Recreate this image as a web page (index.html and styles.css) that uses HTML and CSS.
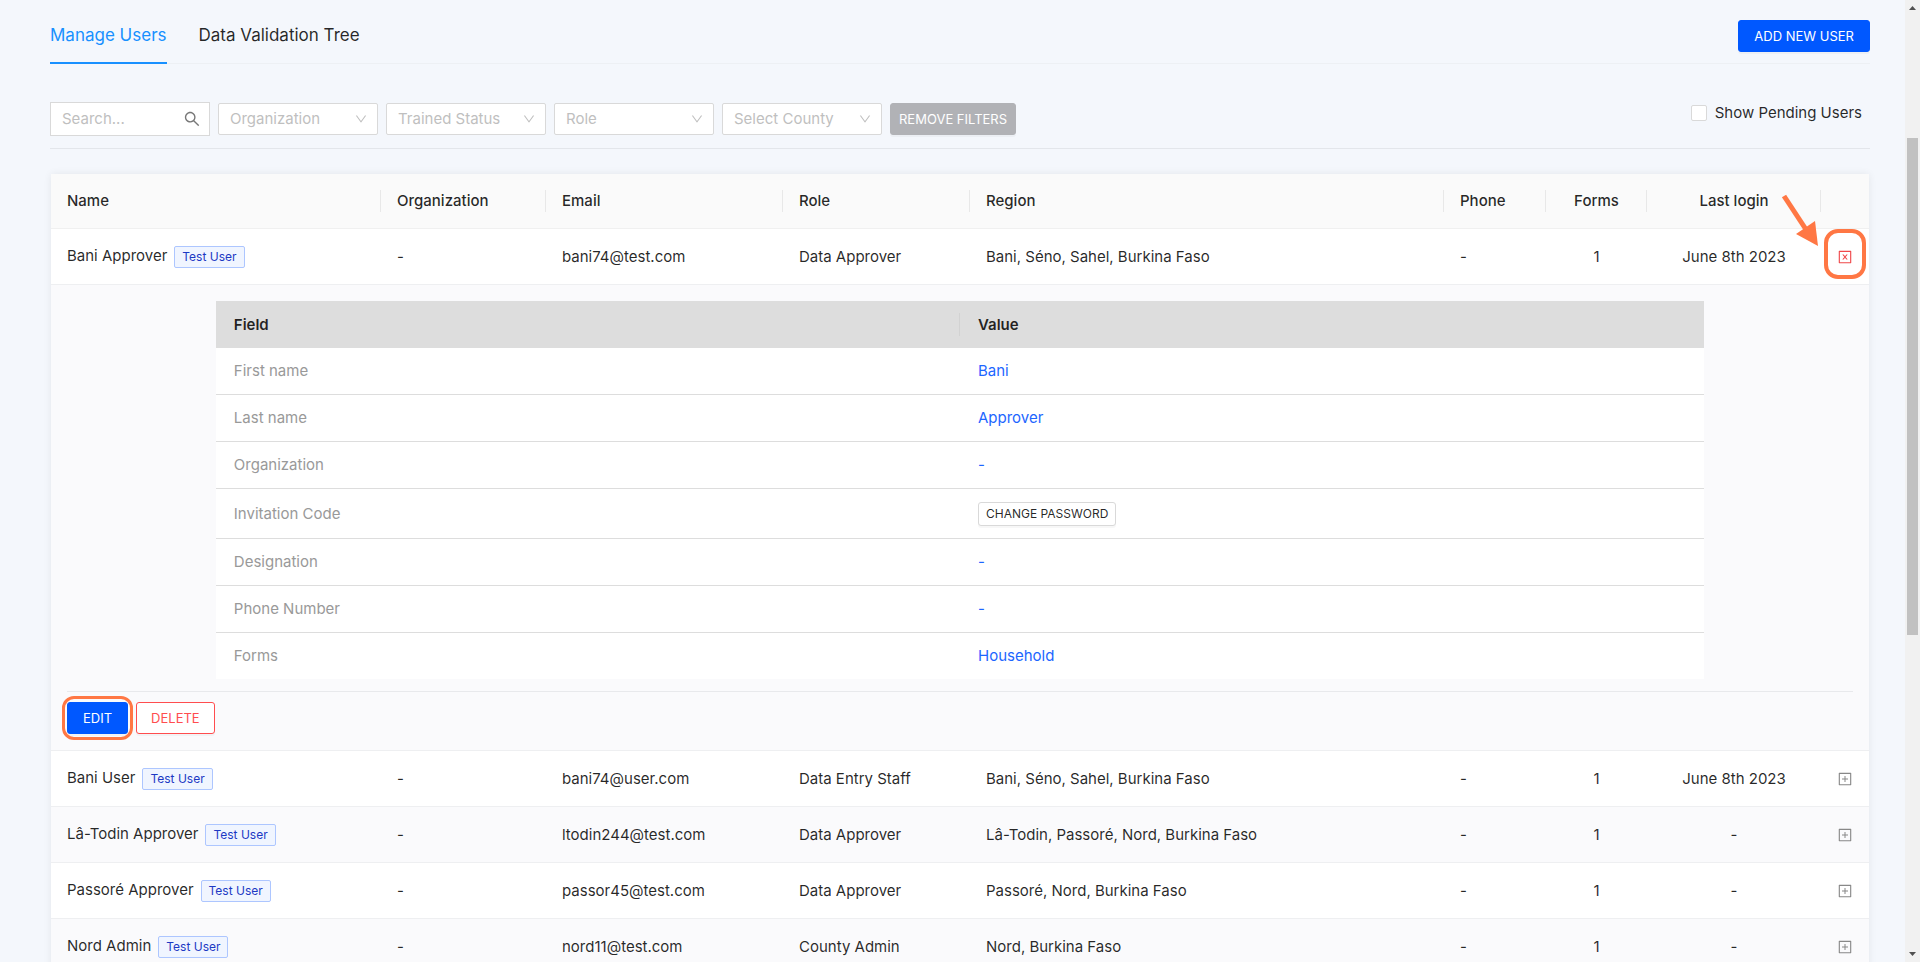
FILE: index.html
```html
<!DOCTYPE html>
<html lang="en">
<head>
<meta charset="utf-8">
<title>Manage Users</title>
<link rel="stylesheet" href="styles.css">
</head>
<body>
<svg class="sprite" aria-hidden="true">
  <symbol id="i-down" viewBox="64 64 896 896"><path d="M884 256h-75c-5.100 0-9.900 2.500-12.900 6.600L512 654.200 227.900 262.600c-3-4.100-7.800-6.600-12.900-6.600h-75c-6.500 0-10.300 7.400-6.500 12.700l352.600 486.100c12.800 17.600 39 17.600 51.700 0l352.600-486.100c3.900-5.300.1-12.700-6.400-12.700z"/></symbol>
  <symbol id="i-plus" viewBox="64 64 896 896"><path d="M328 544h152v152c0 4.400 3.600 8 8 8h48c4.400 0 8-3.600 8-8V544h152c4.400 0 8-3.600 8-8v-48c0-4.400-3.600-8-8-8H544V328c0-4.400-3.600-8-8-8h-48c-4.400 0-8 3.600-8 8v152H328c-4.400 0-8 3.600-8 8v48c0 4.400 3.600 8 8 8z"/><path d="M880 112H144c-17.700 0-32 14.300-32 32v736c0 17.700 14.300 32 32 32h736c17.700 0 32-14.300 32-32V144c0-17.700-14.300-32-32-32zm-40 728H184V184h656v656z"/></symbol>
  <symbol id="i-close" viewBox="64 64 896 896"><path d="M354 671h58.900c4.700 0 9.200-2.100 12.300-5.700L512 561.800l86.800 103.500c3 3.600 7.500 5.700 12.300 5.700H670c6.800 0 10.500-7.900 6.100-13.100L553.800 512l122.400-145.900c4.400-5.200.7-13.100-6.100-13.100h-58.900c-4.700 0-9.200 2.100-12.300 5.700L512 462.200l-86.800-103.500c-3-3.600-7.500-5.700-12.300-5.700H354c-6.800 0-10.500 7.900-6.100 13.100L470.200 512 347.900 657.900A7.950 7.950 0 0 0 354 671z"/><path d="M880 112H144c-17.700 0-32 14.300-32 32v736c0 17.700 14.300 32 32 32h736c17.700 0 32-14.300 32-32V144c0-17.700-14.300-32-32-32zm-40 728H184V184h656v656z"/></symbol>
</svg>
<div class="shell">
<main class="page">
  <header class="topbar">
    <nav class="tabs">
      <a class="tab tab-active" href="#users">Manage Users</a>
      <a class="tab" href="#tree">Data Validation Tree</a>
    </nav>
    <button class="btn btn-primary" type="button">ADD NEW USER</button>
  </header>

  <section class="filters">
    <div class="search">
      <input class="search-input" type="text" placeholder="Search..." aria-label="Search">
      <button class="search-btn" type="button" aria-label="Search users">
        <svg class="icon-search" viewBox="64 64 896 896"><path d="M909.600 854.500L649.900 594.800C690.200 542.700 712 479 712 412c0-80.200-31.300-155.400-87.900-212.100-56.600-56.700-132-87.900-212.100-87.900s-155.500 31.300-212.100 87.900C143.200 256.500 112 331.800 112 412c0 80.100 31.300 155.500 87.900 212.100C256.500 680.800 331.800 712 412 712c67 0 130.600-21.800 182.700-62l259.700 259.600a8.200 8.200 0 0 0 11.600 0l43.600-43.500a8.200 8.200 0 0 0 0-11.600zM570.400 570.400C528 612.700 471.800 636 412 636s-116-23.300-158.400-65.600C211.300 528 188 471.800 188 412s23.300-116.100 65.600-158.400C296 211.300 352.200 188 412 188s116.100 23.200 158.400 65.600S636 352.200 636 412s-23.300 116.100-65.600 158.400z"/></svg>
      </button>
    </div>
    <div class="picker"><select class="select" aria-label="Organization"><option>Organization</option></select><svg class="chevron"><use href="#i-down"/></svg></div>
    <div class="picker"><select class="select" aria-label="Trained Status"><option>Trained Status</option></select><svg class="chevron"><use href="#i-down"/></svg></div>
    <div class="picker"><select class="select" aria-label="Role"><option>Role</option></select><svg class="chevron"><use href="#i-down"/></svg></div>
    <div class="picker"><select class="select" aria-label="Select County"><option>Select County</option></select><svg class="chevron"><use href="#i-down"/></svg></div>
    <button class="btn btn-muted" type="button">REMOVE FILTERS</button>
    <label class="pending"><input class="check" type="checkbox">Show Pending Users</label>
  </section>

  <section class="card">
    <table class="users">
      <colgroup><col class="c-name"><col class="c-org"><col class="c-email"><col class="c-role"><col><col class="c-phone"><col class="c-forms"><col class="c-login"><col class="c-toggle"></colgroup>
      <thead>
        <tr><th>Name</th><th>Organization</th><th>Email</th><th>Role</th><th>Region</th><th>Phone</th><th class="mid">Forms</th><th class="mid">Last login</th><th></th></tr>
      </thead>
      <tbody>
        <tr>
          <td>Bani Approver<span class="tag">Test User</span></td><td>-</td><td>bani74@test.com</td><td>Data Approver</td><td>Bani, Séno, Sahel, Burkina Faso</td><td>-</td><td class="mid">1</td><td class="mid">June 8th 2023</td>
          <td class="mid">
            <span class="marked">
              <button class="toggle toggle-open" type="button" aria-label="Collapse"><svg class="icon"><use href="#i-close"/></svg></button>
              <svg class="arrow" viewBox="0 0 40 54"><path d="M4 3L27 38" stroke="#ff7744" stroke-width="5"/><path d="M38 53L16 41L35 28Z" fill="#ff7744"/></svg>
            </span>
          </td>
        </tr>
        <tr class="alt">
          <td class="detail" colspan="9">
            <table class="fields">
              <thead><tr><th>Field</th><th>Value</th></tr></thead>
              <tbody>
                <tr><td>First name</td><td>Bani</td></tr>
                <tr><td>Last name</td><td>Approver</td></tr>
                <tr><td>Organization</td><td>-</td></tr>
                <tr class="tall"><td>Invitation Code</td><td><button class="btn btn-small" type="button">CHANGE PASSWORD</button></td></tr>
                <tr><td>Designation</td><td>-</td></tr>
                <tr><td>Phone Number</td><td>-</td></tr>
                <tr><td>Forms</td><td>Household</td></tr>
              </tbody>
            </table>
            <div class="actions">
              <span class="marked-edit"><button class="btn btn-primary" type="button">EDIT</button></span>
              <button class="btn btn-danger" type="button">DELETE</button>
            </div>
          </td>
        </tr>
        <tr>
          <td>Bani User<span class="tag">Test User</span></td><td>-</td><td>bani74@user.com</td><td>Data Entry Staff</td><td>Bani, Séno, Sahel, Burkina Faso</td><td>-</td><td class="mid">1</td><td class="mid">June 8th 2023</td>
          <td class="mid"><button class="toggle" type="button" aria-label="Expand"><svg class="icon"><use href="#i-plus"/></svg></button></td>
        </tr>
        <tr class="alt">
          <td>Lâ-Todin Approver<span class="tag">Test User</span></td><td>-</td><td>ltodin244@test.com</td><td>Data Approver</td><td>Lâ-Todin, Passoré, Nord, Burkina Faso</td><td>-</td><td class="mid">1</td><td class="mid">-</td>
          <td class="mid"><button class="toggle" type="button" aria-label="Expand"><svg class="icon"><use href="#i-plus"/></svg></button></td>
        </tr>
        <tr>
          <td>Passoré Approver<span class="tag">Test User</span></td><td>-</td><td>passor45@test.com</td><td>Data Approver</td><td>Passoré, Nord, Burkina Faso</td><td>-</td><td class="mid">1</td><td class="mid">-</td>
          <td class="mid"><button class="toggle" type="button" aria-label="Expand"><svg class="icon"><use href="#i-plus"/></svg></button></td>
        </tr>
        <tr class="alt">
          <td>Nord Admin<span class="tag">Test User</span></td><td>-</td><td>nord11@test.com</td><td>County Admin</td><td>Nord, Burkina Faso</td><td>-</td><td class="mid">1</td><td class="mid">-</td>
          <td class="mid"><button class="toggle" type="button" aria-label="Expand"><svg class="icon"><use href="#i-plus"/></svg></button></td>
        </tr>
      </tbody>
    </table>
  </section>
</main>
<div class="scrollbar" aria-hidden="true">
  <svg class="scroll-arrow" viewBox="0 0 15 16"><path d="M4 10h7L7.500 6z"/></svg>
  <div class="track"><div class="thumb"></div></div>
  <svg class="scroll-arrow" viewBox="0 0 15 16"><path d="M4 6h7L7.500 10z"/></svg>
</div>
</div>
</body>
</html>
```
FILE: styles.css
```css
* { box-sizing: border-box; }
body {
  margin: 0;
  background: #f4f7fc;
  color: rgba(0, 0, 0, 0.85);
  font: 15px/22px Inter, "Open Sans", sans-serif;
}
button, input, select { font: inherit; color: inherit; margin: 0; }
.sprite { display: none; }
.shell { display: flex; height: 100vh; }
.page { flex: 1; min-width: 0; overflow: hidden; padding: 0 35px 0 50px; }

.topbar {
  display: flex;
  justify-content: space-between;
  align-items: flex-start;
  height: 64px;
  border-bottom: 1px solid #edf0f4;
}
.topbar .btn { margin-top: 20px; }
.tabs { display: flex; gap: 32px; height: 64px; }
.tab {
  padding-top: 24px;
  color: rgba(0, 0, 0, 0.85);
  font-size: 17px;
  text-decoration: none;
}
.tab-active { color: #1890ff; border-bottom: 2px solid #1890ff; }

.btn {
  height: 32px;
  padding: 0 15px;
  border: 1px solid #d9d9d9;
  border-radius: 3px;
  background: #fff;
  box-shadow: 0 2px 0 rgba(0, 0, 0, 0.03);
  font-size: 13px;
  white-space: nowrap;
}
.btn-primary { background: #0058ff; border-color: #0058ff; color: #fff; }
.btn-muted { padding: 0 8px; background: #b1b2b6; border-color: #b1b2b6; color: #fff; }
.btn-danger { padding: 0 14px; border-color: #ff4d4f; color: #ff4d4f; }
.btn-small { display: block; height: 24px; padding: 0 7px; font-size: 12px; line-height: 20px; }

.filters {
  display: flex;
  align-items: center;
  gap: 8px;
  height: 85px;
  padding-top: 26px;
  border-bottom: 1px solid #e3e6eb;
}
.search {
  display: flex;
  width: 160px;
  height: 34px;
  border: 1px solid #d9d9d9;
  background: #fff;
}
.search-input { flex: 1; min-width: 0; padding: 0 11px; border: 0; background: none; outline: 0; }
.search-input::placeholder { color: #bfbfbf; opacity: 1; }
.search-btn { display: grid; place-items: center; width: 34px; padding: 0; border: 0; background: none; }
.icon-search { width: 16px; height: 16px; fill: #777; }
.picker { position: relative; width: 160px; }
.select {
  display: block;
  width: 100%;
  height: 32px;
  padding: 0 24px 0 11px;
  border: 1px solid #d9d9d9;
  border-radius: 2px;
  background: #fff;
  color: #bfbfbf;
  appearance: none;
}
.chevron { position: absolute; right: 11px; top: 10px; width: 12px; height: 12px; fill: #bfbfbf; pointer-events: none; }
.pending { display: flex; align-items: center; gap: 8px; margin: 0 8px 12px auto; }
.check { width: 16px; height: 16px; border: 1px solid #d9d9d9; border-radius: 2px; background: #fff; appearance: none; }

.card { margin: 25px 1px 0; background: #fff; box-shadow: 0 0 8px rgba(0, 0, 0, 0.07); }
table { width: 100%; border-collapse: separate; border-spacing: 0; table-layout: fixed; }
th, td { padding: 0 16px; text-align: left; white-space: nowrap; }
.c-name { width: 330px; }
.c-org { width: 165px; }
.c-email { width: 237px; }
.c-role { width: 187px; }
.c-phone { width: 102px; }
.c-forms { width: 101px; }
.c-login { width: 174px; }
.c-toggle { width: 48px; }
.users > thead th {
  height: 55px;
  border-bottom: 1px solid #f0f0f0;
  background: linear-gradient(#e8e8e8, #e8e8e8) right center / 1px 22px no-repeat #fafafa;
  font-weight: 500;
}
.users > thead th:last-child { background: #fafafa; }
.users > tbody > tr > td { height: 56px; border-bottom: 1px solid #eeeff1; }
.alt { background: #fafafc; }
.users .mid { text-align: center; }
.tag {
  display: inline-block;
  margin-left: 7px;
  padding: 0 7px;
  border: 1px solid #adc6ff;
  border-radius: 2px;
  background: #f0f5ff;
  color: #1d39c4;
  font-size: 12px;
  line-height: 20px;
}
.toggle { display: block; margin: auto; padding: 0; border: 0; background: none; color: #888; }
.toggle-open { color: #f0484a; }
.icon { display: block; width: 14px; height: 14px; fill: currentColor; }
.users td.mid:last-child { padding: 0; }

/* Highlight marks drawn over the controls */
.marked { position: relative; display: block; width: 14px; margin: auto; }
.marked::after {
  content: "";
  position: absolute;
  inset: -21px -14px -15px;
  border: 4px solid #ff7744;
  border-radius: 14px;
  pointer-events: none;
}
.arrow { position: absolute; right: 32px; bottom: 17px; width: 40px; height: 54px; }
.marked-edit { position: relative; }
.marked-edit::after {
  content: "";
  position: absolute;
  inset: -6px -5px;
  border: 3px solid #ff7744;
  border-radius: 12px;
  pointer-events: none;
}

.users > tbody > tr > .detail { padding: 16px; }
.fields { width: calc(100% * 5 / 6); margin: 0 auto 12px; background: #fff; }
.fields th, .fields td { height: 47px; padding: 0 18px; }
.fields th { background: #ddd; font-weight: 600; }
.fields th:first-child { background: linear-gradient(#d2d2d2, #d2d2d2) right center / 1px 23px no-repeat #ddd; }
.fields td { border-bottom: 1px solid #ddd; color: #999; }
.fields td:last-child { color: #1d66ff; }
.fields .tall td { height: 50px; }
.fields .btn-small { color: rgba(0, 0, 0, 0.85); }
.fields tr:last-child td { height: 46px; border-bottom: 0; }
.actions { display: flex; gap: 8px; padding-top: 10px; border-top: 1px solid #e8e9ec; }

.scrollbar { display: flex; flex-direction: column; width: 15px; background: #f1f1f1; }
.scroll-arrow { width: 15px; height: 16px; fill: #505050; }
.track { flex: 1; padding: 0 2px; }
.thumb { height: 497px; margin-top: 122px; background: #c1c1c1; }
```
